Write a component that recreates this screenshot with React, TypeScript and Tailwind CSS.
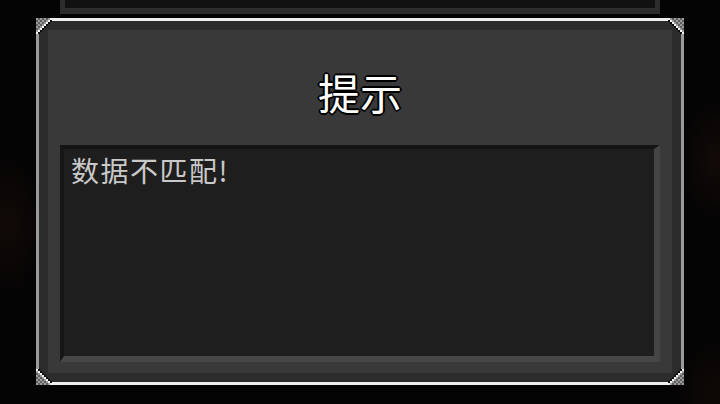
import React from 'react';

// Pixel-art corner stud used on all four corners of the dialog frame.
const Corner: React.FC<{ className: string; flip?: string }> = ({ className, flip = '' }) => {
  const cells: { x: number; y: number; fill: string }[] = [];
  for (let y = 0; y < 8; y++) {
    for (let x = 0; x < 8; x++) {
      const d = x + y;
      if (d === 7) cells.push({ x, y, fill: '#f2f2f2' });
      else if (d === 8) cells.push({ x, y, fill: '#0c0c0c' });
      else if (d < 7) cells.push({ x, y, fill: (x + y) % 2 === 0 ? '#9c9c9c' : '#5e5e5e' });
    }
  }
  return (
    <svg
      className={`absolute w-[16px] h-[16px] ${className}`}
      viewBox="0 0 16 16"
      shapeRendering="crispEdges"
    >
      <g transform={flip}>
        {cells.map((c) => (
          <rect key={`${c.x}-${c.y}`} x={c.x * 2} y={c.y * 2} width={2} height={2} fill={c.fill} />
        ))}
      </g>
    </svg>
  );
};

const App: React.FC = () => {
  return (
    <div className="w-[720px] h-[404px] overflow-hidden flex flex-col bg-[#050404] bg-[radial-gradient(ellipse_36px_70px_at_8px_225px,#110a07,transparent),radial-gradient(ellipse_36px_60px_at_716px_160px,#120b08,transparent),radial-gradient(ellipse_36px_50px_at_714px_390px,#0f0906,transparent)] [font-family:'Noto_Sans_CJK_SC','Noto_Sans',sans-serif]">
      {/* bottom edge of the window stacked above */}
      <div className="mx-[60px] h-[14px] shrink-0 border-x-[5px] border-b-[6px] border-[#2c2c2c] bg-[#111111]" />

      {/* dialog */}
      <div className="relative mt-[4px] ml-[36px] w-[648px] h-[367px] border-y-[3px] border-y-[#efefef] border-x-[3px] border-x-[#9a9a9a]">
        <div className="h-full border-[9px] border-[#2c2c2c] bg-[#393939] flex flex-col px-[12px] pb-[11px]">
          <div className="h-[115px] flex items-center justify-center pt-[8px]">
            <h1 className="text-[42px] leading-none text-white [text-shadow:2px_0_#000,-2px_0_#000,0_2px_#000,0_-2px_#000,1px_1px_#000,-1px_-1px_#000,1px_-1px_#000,-1px_1px_#000]">
              提示
            </h1>
          </div>
          <div className="flex-1 border-t-[4px] border-l-[4px] border-t-[#141414] border-l-[#161616] border-b-[6px] border-r-[6px] border-b-[#474747] border-r-[#444444] bg-[#1e1e1e] px-[7px] pt-[4px]">
            <p className="text-[28px] leading-tight text-[#c9c9c9] tracking-[1.5px]">数据不匹配!</p>
          </div>
        </div>

        <Corner className="-top-[3px] -left-[3px]" />
        <Corner className="-top-[3px] -right-[3px]" flip="translate(16 0) scale(-1 1)" />
        <Corner className="-bottom-[3px] -left-[3px]" flip="translate(0 16) scale(1 -1)" />
        <Corner className="-bottom-[3px] -right-[3px]" flip="translate(16 16) scale(-1 -1)" />
      </div>
    </div>
  );
};

export default App;
